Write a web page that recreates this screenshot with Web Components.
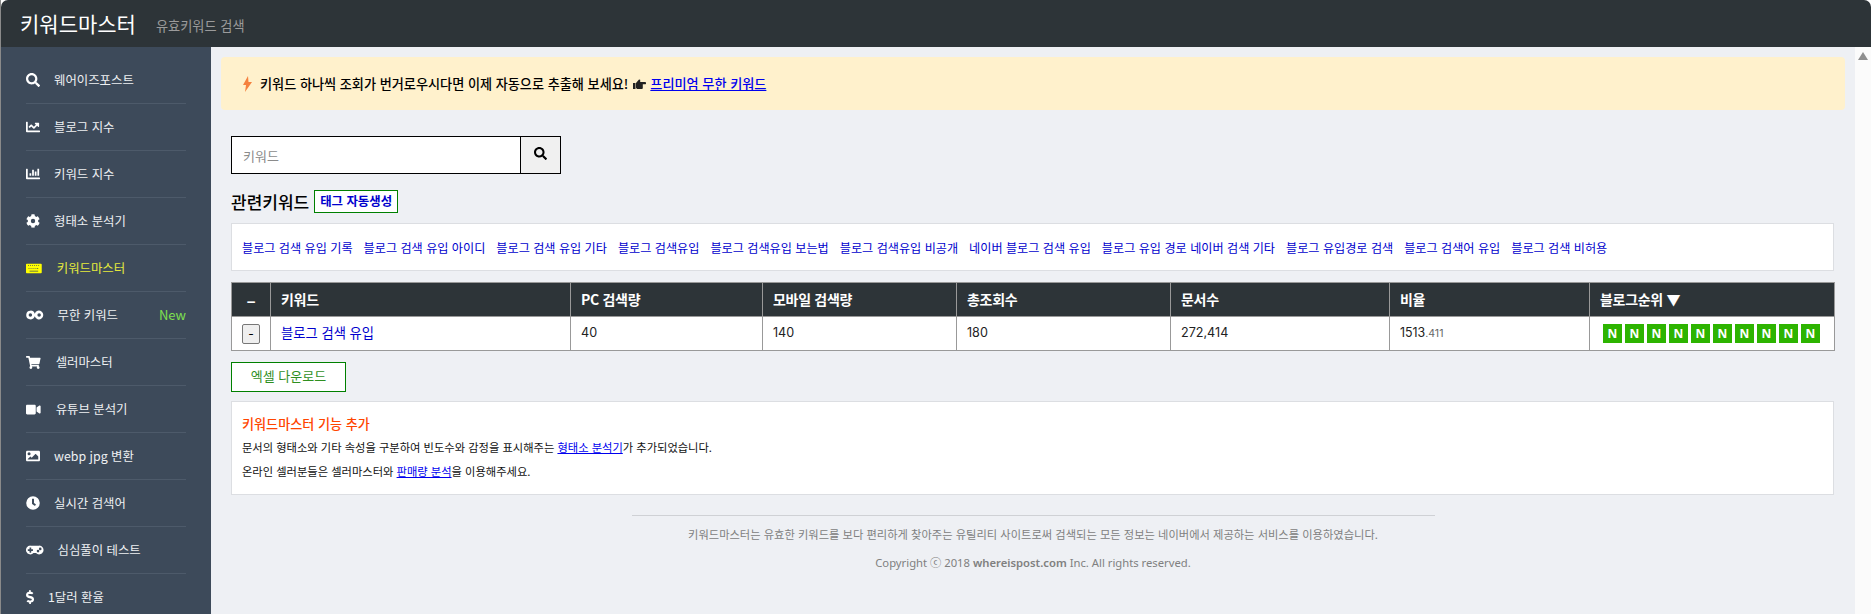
<!DOCTYPE html>
<html lang="ko">
<head>
<meta charset="utf-8">
<title>키워드마스터</title>
<style>
  html, body { margin:0; height:100%; overflow:hidden; background:#fff; }
  body { font-family:"Noto Sans CJK KR","Noto Sans",sans-serif; font-size:13px; color:#000; }
</style>
</head>
<body>
<km-app>
  <km-header slot="header" title="키워드마스터" sub="유효키워드 검색"></km-header>
  <km-sidebar slot="side">
    <km-nav icon="search">웨어이즈포스트</km-nav>
    <km-nav icon="line">블로그 지수</km-nav>
    <km-nav icon="bar">키워드 지수</km-nav>
    <km-nav icon="cog">형태소 분석기</km-nav>
    <km-nav icon="keyboard" active>키워드마스터</km-nav>
    <km-nav icon="infinity" badge="New">무한 키워드</km-nav>
    <km-nav icon="cart">셀러마스터</km-nav>
    <km-nav icon="video">유튜브 분석기</km-nav>
    <km-nav icon="image">webp jpg 변환</km-nav>
    <km-nav icon="clock">실시간 검색어</km-nav>
    <km-nav icon="game">심심풀이 테스트</km-nav>
    <km-nav icon="dollar">1달러 환율</km-nav>
  </km-sidebar>
  <km-banner>키워드 하나씩 조회가 번거로우시다면 이제 자동으로 추출해 보세요!<a slot="link" href="#">프리미엄 무한 키워드</a></km-banner>
  <km-search></km-search>
  <km-related></km-related>
  <km-table></km-table>
  <km-excel></km-excel>
  <km-info></km-info>
  <km-footer></km-footer>
</km-app>

<script>
const ICONS = {
  search: [512, '<path d="M505 442.7L405.3 343c-4.5-4.5-10.6-7-17-7H372c27.6-35.3 44-79.7 44-128C416 93.1 322.9 0 208 0S0 93.1 0 208s93.1 208 208 208c48.3 0 92.7-16.4 128-44v16.3c0 6.4 2.5 12.5 7 17l99.7 99.7c9.4 9.4 24.6 9.4 33.9 0l28.3-28.3c9.4-9.4 9.4-24.6.1-34zM208 336c-70.7 0-128-57.2-128-128 0-70.7 57.2-128 128-128 70.7 0 128 57.2 128 128 0 70.7-57.2 128-128 128z"/>'],
  line: [512, '<path d="M496 384H64V80c0-8.84-7.16-16-16-16H16C7.16 64 0 71.16 0 80v336c0 17.67 14.33 32 32 32h464c8.84 0 16-7.16 16-16v-32c0-8.84-7.16-16-16-16zM464 96H345.94c-21.38 0-32.09 25.85-16.97 40.97l32.4 32.4L288 242.75l-73.37-73.37c-12.5-12.5-32.76-12.5-45.25 0l-68.69 68.69c-6.25 6.25-6.25 16.38 0 22.63l22.62 22.62c6.25 6.25 16.38 6.25 22.63 0L192 237.25l73.37 73.37c12.5 12.5 32.76 12.5 45.25 0l96-96 32.4 32.4c15.12 15.12 40.97 4.41 40.97-16.97V112c.01-8.84-7.15-16-15.99-16z"/>'],
  bar: [512, '<path d="M332.8 320h38.4c6.4 0 12.8-6.4 12.8-12.8V172.8c0-6.4-6.4-12.8-12.8-12.8h-38.4c-6.4 0-12.8 6.4-12.8 12.8v134.4c0 6.4 6.4 12.8 12.8 12.8zm96 0h38.4c6.4 0 12.8-6.4 12.8-12.8V76.8c0-6.4-6.4-12.8-12.8-12.8h-38.4c-6.4 0-12.8 6.4-12.8 12.8v230.4c0 6.4 6.4 12.8 12.8 12.8zm-288 0h38.4c6.4 0 12.8-6.4 12.8-12.8v-70.4c0-6.4-6.4-12.8-12.8-12.8h-38.4c-6.4 0-12.8 6.4-12.8 12.8v70.4c0 6.4 6.4 12.8 12.8 12.8zm96 0h38.4c6.4 0 12.8-6.4 12.8-12.8V108.8c0-6.4-6.4-12.8-12.8-12.8h-38.4c-6.4 0-12.8 6.4-12.8 12.8v198.4c0 6.4 6.4 12.8 12.8 12.8zM496 384H64V80c0-8.84-7.16-16-16-16H16C7.16 64 0 71.16 0 80v336c0 17.67 14.33 32 32 32h464c8.84 0 16-7.16 16-16v-32c0-8.84-7.16-16-16-16z"/>'],
  cog: [512, '<path fill-rule="evenodd" d="M487 315l-43-25a196 196 0 0 0 0-68l43-25c5-3 7-9 6-14-11-36-30-68-55-95-4-4-10-5-15-2l-43 25a192 192 0 0 0-59-34V27c0-6-4-11-9-12-37-8-75-8-110 0-6 1-10 6-10 12v50a192 192 0 0 0-59 34L90 86c-5-3-11-2-15 2-25 27-44 59-55 95-2 5 1 11 6 14l43 25a196 196 0 0 0 0 68l-43 25c-5 3-8 9-6 14 11 36 30 68 55 95 4 4 10 5 15 2l43-25a192 192 0 0 0 59 34v50c0 6 4 11 10 12 37 8 75 8 110 0 5-1 9-6 9-12v-50a192 192 0 0 0 59-34l43 25c5 3 11 2 15-2 25-27 44-59 55-95 1-5-1-11-6-14zM256 336a80 80 0 1 1 0-160 80 80 0 0 1 0 160z"/>'],
  keyboard: [620, '<path fill-rule="evenodd" d="M30 64h560a30 30 0 0 1 30 30v324a30 30 0 0 1-30 30H30a30 30 0 0 1-30-30V94a30 30 0 0 1 30-30zM80 130v32h36v-32zm80 0v32h36v-32zm80 0v32h36v-32zm80 0v32h36v-32zm80 0v32h36v-32zm80 0v32h36v-32zM100 236v32h36v-32zm80 0v32h36v-32zm80 0v32h36v-32zm80 0v32h36v-32zm80 0v32h60v-32zM140 340v32h340v-32z"/>'],
  infinity: [640, '<path fill-rule="evenodd" d="M160 96a160 160 0 0 1 160 110 160 160 0 1 1 0 100A160 160 0 1 1 160 96zm0 96a64 64 0 1 0 0 128 64 64 0 0 0 0-128zm320 0a64 64 0 1 0 0 128 64 64 0 0 0 0-128z"/>'],
  cart: [576, '<path d="M528 301l47-208c3-15-8-29-23-29H159l-9-45C148 8 138 0 127 0H24C11 0 0 11 0 24v16c0 13 11 24 24 24h70l70 343c-17 10-28 28-28 49a56 56 0 0 0 112 0c0-16-7-30-17-40h210c-11 10-17 24-17 40a56 56 0 0 0 112 0c0-22-13-41-32-50l6-24c3-15-8-29-23-29H218l-7-32h293c11 0 21-8 24-19z"/>'],
  video: [576, '<path d="M336 64H48C21 64 0 85 0 112v288c0 27 21 48 48 48h288c27 0 48-21 48-48V112c0-27-21-48-48-48zm190 38L416 177v158l110 75c21 15 50 0 50-26V128c0-26-29-41-50-26z"/>'],
  image: [512, '<path fill-rule="evenodd" d="M464 448H48c-27 0-48-21-48-48V112c0-27 21-48 48-48h416c27 0 48 21 48 48v288c0 27-21 48-48 48zM112 120a56 56 0 1 0 0 112 56 56 0 0 0 0-112zM64 384h384V272l-88-88c-5-5-12-5-17 0L208 320l-40-40c-5-5-12-5-17 0l-87 88z"/>'],
  clock: [512, '<path fill-rule="evenodd" d="M256 8a248 248 0 1 0 0 496 248 248 0 0 0 0-496zm57 350l-88-64c-3-2-5-6-5-10V116c0-7 5-12 12-12h48c7 0 12 5 12 12v138l64 46c5 4 6 11 3 17l-29 39c-4 5-11 6-17 2z"/>'],
  game: [640, '<path fill-rule="evenodd" d="M480 96H160a160 160 0 1 0 114 272h92a160 160 0 1 0 114-272zM256 276c0 7-5 12-12 12h-52v52c0 7-5 12-12 12h-40c-7 0-12-5-12-12v-52H76c-7 0-12-5-12-12v-40c0-7 5-12 12-12h52v-52c0-7 5-12 12-12h40c7 0 12 5 12 12v52h52c7 0 12 5 12 12zm184 68a48 48 0 1 1 0-96 48 48 0 0 1 0 96zm80-80a48 48 0 1 1 0-96 48 48 0 0 1 0 96z"/>'],
  dollar: [288, '<path d="M209 233l-108-31c-12-4-21-15-21-28 0-16 13-29 29-29h66c12 0 24 4 34 11 6 4 14 3 19-2l34-33c7-7 6-18-2-24-24-19-54-29-85-29V24c0-13-11-24-24-24h-16c-13 0-24 11-24 24v44h-3C46 68-5 126 1 193c4 48 41 87 87 100l103 30c12 4 21 15 21 28 0 16-13 29-29 29h-66c-12 0-24-4-34-11-6-4-14-3-19 2l-34 33c-7 7-6 18 2 24 24 19 54 29 85 29v44c0 13 11 24 24 24h16c13 0 24-11 24-24v-44c47-1 91-29 106-74 22-63-16-131-78-150z"/>']
};

function svgIcon(name, h) {
  const [w, inner] = ICONS[name];
  return `<svg width="${h * w / 512}" height="${h}" viewBox="0 0 ${w} 512" fill="currentColor" aria-hidden="true">${inner}</svg>`;
}

class KmApp extends HTMLElement {
  constructor() {
    super();
    const shadowRoot = this.attachShadow({mode: 'open'});
    shadowRoot.innerHTML = `
      <style>
        :host { display:grid; grid-template-columns:210px 1fr 16px; grid-template-rows:47px 567px; height:614px; border-left:1px solid #8a8a8a; box-sizing:border-box; }
        .top { grid-column:1 / 4; }
        .main { background:#eef0f4; padding:10px 10px 0; overflow:hidden; min-width:0; }
        .bar { background:#fbfbfb; display:flex; justify-content:center; padding-top:5px; }
        .bar i { width:0; height:0; border-left:5px solid transparent; border-right:5px solid transparent; border-bottom:8px solid #8f8f8f; }
      </style>
      <div class="top"><slot name="header"></slot></div>
      <slot name="side"></slot>
      <div class="main"><slot></slot></div>
      <div class="bar"><i></i></div>`;
  }
}

class KmHeader extends HTMLElement {
  constructor() {
    super();
    this.attachShadow({mode: 'open'}).innerHTML = `
      <style>
        :host { display:flex; align-items:center; height:47px; background:#2d3438; border-radius:7px 7px 0 0; padding-left:19px; }
        h1 { margin:0 0 2px; font-size:21px; font-weight:400; color:#fff; }
        span { margin-left:20px; margin-top:3px; font-size:13.200px; color:#9b9b9b; }
      </style>
      <h1>${this.getAttribute('title')}</h1><span>${this.getAttribute('sub')}</span>`;
    this.removeAttribute('title');
  }
}

class KmSidebar extends HTMLElement {
  constructor() {
    super();
    this.attachShadow({mode: 'open'}).innerHTML = `
      <style>:host { display:block; background:#3d4a5a; padding:10px 25px 0; overflow:hidden; }</style><slot></slot>`;
  }
}

class KmNav extends HTMLElement {
  constructor() {
    super();
    const icon = this.getAttribute('icon');
    const active = this.hasAttribute('active');
    const badge = this.getAttribute('badge');
    const sizes = {keyboard: 13, infinity: 14, cart: 13, video: 13};
    const gaps = {search:14, line:14, bar:14, cog:14, keyboard:15, infinity:14, cart:15, video:15, image:14, clock:14, game:14, dollar:14};
    const iconH = sizes[icon] || 14;
    this.attachShadow({mode: 'open'}).innerHTML = `
      <style>
        :host { display:flex; align-items:center; height:46px; border-bottom:1px solid #4d5a6a; color:${active ? '#ffff00' : '#fff'}; font-size:12.400px; }
        :host(:last-child) { border-bottom:0; }
        svg { flex:none; display:block; }
        .t { margin-left:${gaps[icon]}px; flex:1; white-space:nowrap; padding-bottom:1px; color:${active ? '#e6ea3c' : '#eef0f2'}; }
        .b { color:#7fe04f; font-size:13px; padding-bottom:1px; }
      </style>
      ${svgIcon(icon, iconH)}<span class="t"><slot></slot></span>${badge ? `<span class="b">${badge}</span>` : ''}`;
  }
}

class KmBanner extends HTMLElement {
  constructor() {
    super();
    this.attachShadow({mode: 'open'}).innerHTML = `
      <style>
        :host { display:flex; align-items:center; height:53px; background:#fff1cc; border-radius:4px; padding-left:22px; font-size:13.130px; font-weight:500; color:#000; }
        .bolt { margin-right:8px; display:block; }
        .hand { margin:0 4px 0 5px; display:block; }
        ::slotted(a) { color:#0000ee; text-decoration:underline; }
      </style>
      <svg class="bolt" width="9" height="16" viewBox="0 0 9 16"><path d="M5 0L0 9h3L2 16l7-10H5.500z" fill="#f5813f"/></svg>
      <span><slot></slot></span>
      <svg class="hand" width="13" height="12" viewBox="0 0 13 12"><path d="M0 5h2.500v6H0zM3 5l3-3.500 1.200.3V4h4.800a1 1 0 0 1 0 2.200H9.800v4a1 1 0 0 1-1 .8H4.200L3 10z" fill="#222"/></svg>
      <slot name="link"></slot>`;
  }
}

class KmSearch extends HTMLElement {
  constructor() {
    super();
    this.attachShadow({mode: 'open'}).innerHTML = `
      <style>
        :host { display:flex; width:330px; height:38px; margin:26px 0 0 10px; border:1px solid #000; box-sizing:border-box; }
        input { flex:1; min-width:0; border:0; outline:0; padding:0 11px; font:13px "Noto Sans CJK KR",sans-serif; background:#fff; }
        input::placeholder { color:#8b8b8b; opacity:1; }
        button { width:40px; border:0; border-left:1px solid #000; background:#f0f0f0; padding:0; display:flex; align-items:center; justify-content:center; padding-bottom:3px; }
      </style>
      <input placeholder="키워드"><button>${svgIcon('search', 13)}</button>`;
  }
}

class KmRelated extends HTMLElement {
  constructor() {
    super();
    const words = ['블로그 검색 유입 기록','블로그 검색 유입 아이디','블로그 검색 유입 기타','블로그 검색유입','블로그 검색유입 보는법','블로그 검색유입 비공개','네이버 블로그 검색 유입','블로그 유입 경로 네이버 검색 기타','블로그 유입경로 검색','블로그 검색어 유입','블로그 검색 비허용'];
    this.attachShadow({mode: 'open'}).innerHTML = `
      <style>
        :host { display:block; margin:16px 11px 0 10px; }
        .head { display:flex; align-items:center; height:23px; }
        h2 { margin:0; font-size:17px; font-weight:500; }
        .tag { margin-left:5px; height:23px; line-height:21px; padding:0 5px; box-sizing:border-box; border:1px solid #008000; background:#fff; color:#0000cd; font-size:12.400px; font-weight:700; }
        .words { display:flex; gap:11px; margin-top:10px; height:48px; box-sizing:border-box; align-items:center; padding:0 10px; background:#fff; border:1px solid #dcdee2; font-size:12.130px; white-space:nowrap; }
        a { color:#0000cd; text-decoration:none; }
      </style>
      <div class="head"><h2>관련키워드</h2><span class="tag">태그 자동생성</span></div>
      <div class="words">${words.map(w => `<a href="#">${w}</a>`).join('')}</div>`;
  }
}

class KmTable extends HTMLElement {
  constructor() {
    super();
    const heads = [['–',39],['키워드',300],['PC 검색량',192],['모바일 검색량',194],['총조회수',214],['문서수',219],['비율',200],['블로그순위 ▼',245]];
    this.attachShadow({mode: 'open'}).innerHTML = `
      <style>
        :host { display:block; margin:11px 11px 0 10px; }
        table { width:100%; table-layout:fixed; border-collapse:collapse; background:#fff; }
        th, td { border:1px solid #999; padding:0 0 0 10px; box-sizing:border-box; height:34px; text-align:left; white-space:nowrap; overflow:hidden; }
        th { background:#2d3438; color:#fff; font-size:14px; font-weight:700; letter-spacing:-.3px; padding-bottom:1px; }
        th:first-child { font-size:17px; }
        td { font:12.600px Inter,"Noto Sans CJK KR",sans-serif; color:#222; padding-bottom:2px; }
        th:first-child, td:first-child { text-align:center; padding:0; }
        a { color:#0000cd; text-decoration:none; font:13.300px "Noto Sans CJK KR",sans-serif; }
        .toggle { display:inline-block; width:18px; height:20px; line-height:17px; box-sizing:border-box; border:1px solid #777; border-radius:2px; background:#efefef; font-size:12px; color:#000; vertical-align:middle; }
        small { font-size:10.500px; color:#666; }
        .rate { font-size:12.400px; }
        .ranks { display:flex; gap:3px; padding-left:3px; padding-top:2px; }
        .ranks b { width:19px; height:19px; line-height:19px; text-align:center; background:#2db400; color:#fff; font-size:12px; font-weight:700; font-family:"Noto Sans",sans-serif; }
      </style>
      <table>
        <colgroup>${heads.map(h => `<col style="width:${h[1]}px">`).join('')}</colgroup>
        <tr>${heads.map(h => `<th>${h[0]}</th>`).join('')}</tr>
        <tr>
          <td><span class="toggle">-</span></td>
          <td><a href="#">블로그 검색 유입</a></td>
          <td>40</td><td>140</td><td>180</td><td>272,414</td>
          <td class="rate">1513<small>.411</small></td>
          <td><div class="ranks">${'<b>N</b>'.repeat(10)}</div></td>
        </tr>
      </table>`;
  }
}

class KmExcel extends HTMLElement {
  constructor() {
    super();
    this.attachShadow({mode: 'open'}).innerHTML = `
      <style>
        :host { display:block; width:115px; height:30px; line-height:26px; margin:11px 0 0 10px; box-sizing:border-box; border:1px solid #008000; background:#fff; color:#2f8f1f; font-size:13px; text-align:center; }
      </style>엑셀 다운로드`;
  }
}

class KmInfo extends HTMLElement {
  constructor() {
    super();
    this.attachShadow({mode: 'open'}).innerHTML = `
      <style>
        :host { display:block; height:94px; margin:9px 11px 0 10px; box-sizing:border-box; padding:12px 10px; background:#fff; border:1px solid #dcdee2; font-size:11.270px; }
        h3 { margin:0 0 5px; font-size:13.100px; font-weight:500; color:#ff4500; line-height:20px; }
        p { margin:0; line-height:17px; padding-bottom:7px; color:#111; }
        a { color:#0000ee; }
      </style>
      <h3>키워드마스터 기능 추가</h3>
      <p>문서의 형태소와 기타 속성을 구분하여 빈도수와 감정을 표시해주는 <a href="#">형태소 분석기</a>가 추가되었습니다.</p>
      <p>온라인 셀러분들은 셀러마스터와 <a href="#">판매량 분석</a>을 이용해주세요.</p>`;
  }
}

class KmFooter extends HTMLElement {
  constructor() {
    super();
    this.attachShadow({mode: 'open'}).innerHTML = `
      <style>
        :host { display:block; margin-top:20px; text-align:center; color:#808080; font-size:11.270px; }
        hr { width:803px; margin:0 auto; border:0; border-top:1px solid #cfd1d5; }
        p { margin:0; }
        .a { margin-top:10px; line-height:17px; }
        .b { margin-top:11px; line-height:17px; font-family:"Noto Sans","Noto Sans CJK KR",sans-serif; }
        b { font-weight:600; }
      </style>
      <hr>
      <p class="a">키워드마스터는 유효한 키워드를 보다 편리하게 찾아주는 유틸리티 사이트로써 검색되는 모든 정보는 네이버에서 제공하는 서비스를 이용하였습니다.</p>
      <p class="b">Copyright ⓒ 2018 <b>whereispost.com</b> Inc. All rights reserved.</p>`;
  }
}

customElements.define('km-app', KmApp);
customElements.define('km-header', KmHeader);
customElements.define('km-sidebar', KmSidebar);
customElements.define('km-nav', KmNav);
customElements.define('km-banner', KmBanner);
customElements.define('km-search', KmSearch);
customElements.define('km-related', KmRelated);
customElements.define('km-table', KmTable);
customElements.define('km-excel', KmExcel);
customElements.define('km-info', KmInfo);
customElements.define('km-footer', KmFooter);
</script>
</body>
</html>
